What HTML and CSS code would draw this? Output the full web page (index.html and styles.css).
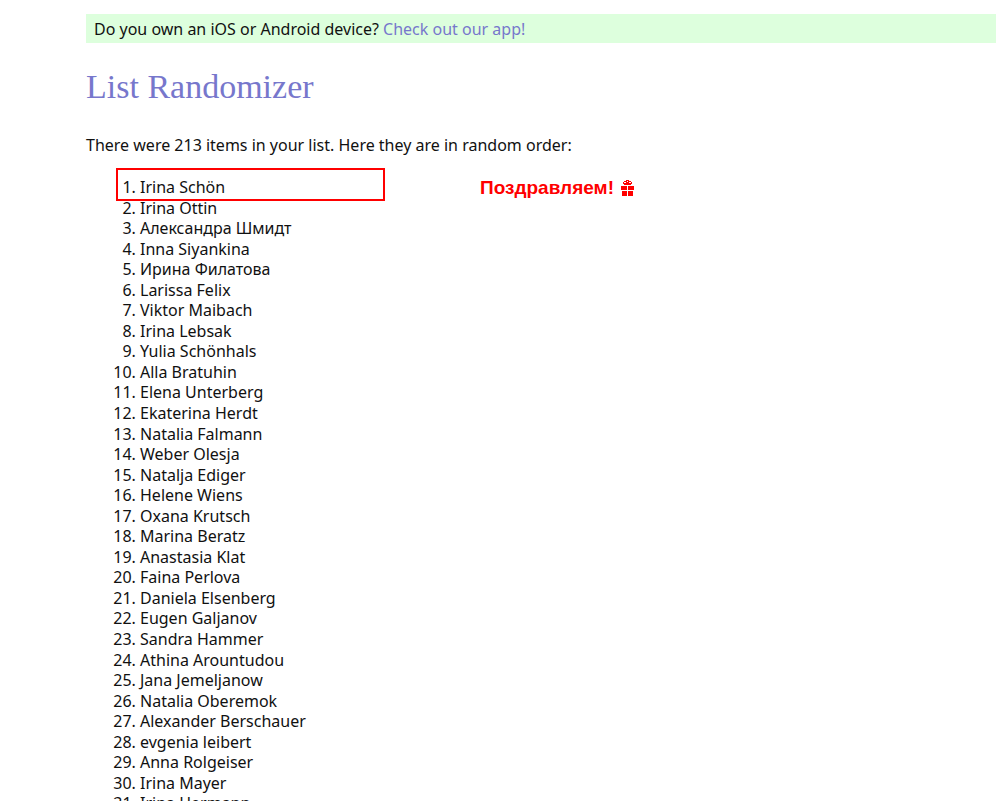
FILE: index.html
```html
<!DOCTYPE html>
<html lang="en">
  <head>
    <meta charset="UTF-8" />
    <meta name="viewport" content="width=device-width, initial-scale=1.0" />
    <title>List Randomizer</title>
    <link rel="stylesheet" href="styles.css">
  </head>
  <body>
    <p class="notice">Do you own an iOS or Android device? <a href="#">Check out our app!</a></p>
    <main class="content">
      <h2>List Randomizer</h2>
      <p>There were 213 items in your list. Here they are in random order:</p>
      <div class="results">
        <ol>
          <li>Irina Schön</li>
          <li>Irina Ottin</li>
          <li>Александра Шмидт</li>
          <li>Inna Siyankina</li>
          <li>Ирина Филатова</li>
          <li>Larissa Felix</li>
          <li>Viktor Maibach</li>
          <li>Irina Lebsak</li>
          <li>Yulia Schönhals</li>
          <li>Alla Bratuhin</li>
          <li>Elena Unterberg</li>
          <li>Ekaterina Herdt</li>
          <li>Natalia Falmann</li>
          <li>Weber Olesja</li>
          <li>Natalja Ediger</li>
          <li>Helene Wiens</li>
          <li>Oxana Krutsch</li>
          <li>Marina Beratz</li>
          <li>Anastasia Klat</li>
          <li>Faina Perlova</li>
          <li>Daniela Elsenberg</li>
          <li>Eugen Galjanov</li>
          <li>Sandra Hammer</li>
          <li>Athina Arountudou</li>
          <li>Jana Jemeljanow</li>
          <li>Natalia Oberemok</li>
          <li>Alexander Berschauer</li>
          <li>evgenia leibert</li>
          <li>Anna Rolgeiser</li>
          <li>Irina Mayer</li>
          <li>Irina Hermann</li>
        </ol>
        <div class="winner-frame"></div>
        <div class="congrats" lang="ru">
          <span>Поздравляем!</span>
          <svg class="gift" width="13" height="16" viewBox="0 0 13 16" fill="#f00" shape-rendering="crispEdges">
            <!-- bow -->
            <path d="M5 0h3v1h2v1h1v2h-1v1h-7v-1h-1v-2h1v-1h2z M3 2v1h2v-1z M8 2v1h2v-1z M6 1v1h1v-1z" fill-rule="evenodd" />
            <!-- lid and box, split by the ribbon -->
            <path d="M0 6h6v4h-6z M7 6h6v4h-6z" />
            <path d="M1 11h5v5h-5z M7 11h5v5h-5z" />
          </svg>
        </div>
      </div>
    </main>
  </body>
</html>
```

FILE: styles.css
```css
body {
  margin: 0;
  padding: 14px 0 0 86px;
  height: 100vh;
  box-sizing: border-box;
  overflow: hidden;
  background: #fff;
  color: #111;
  font-family: Tahoma, 'Noto Sans', sans-serif;
  font-size: 16px;
  line-height: 21px;
}
a {
  color: #77c;
  text-decoration: none;
}
p {
  margin: 0;
}
.notice {
  padding: 5px 8px 3px;
  background: #dfd;
}
h2 {
  margin: 24px 0 28px;
  color: #77c;
  font: 34px/40px Georgia, 'Liberation Serif', serif;
}
.results {
  position: relative;
  margin-top: 21px;
}
ol {
  margin: 0;
  padding-left: 54px;
  line-height: 1.285;
}
.winner-frame {
  position: absolute;
  left: 30px;
  top: -9px;
  width: 269px;
  height: 33px;
  box-sizing: border-box;
  border: 2px solid #f00;
}
.congrats {
  position: absolute;
  left: 394px;
  top: 0;
  display: flex;
  align-items: center;
  gap: 7px;
  color: #f00;
  font: bold 19px/21px Arial, 'Liberation Sans', sans-serif;
}
```
